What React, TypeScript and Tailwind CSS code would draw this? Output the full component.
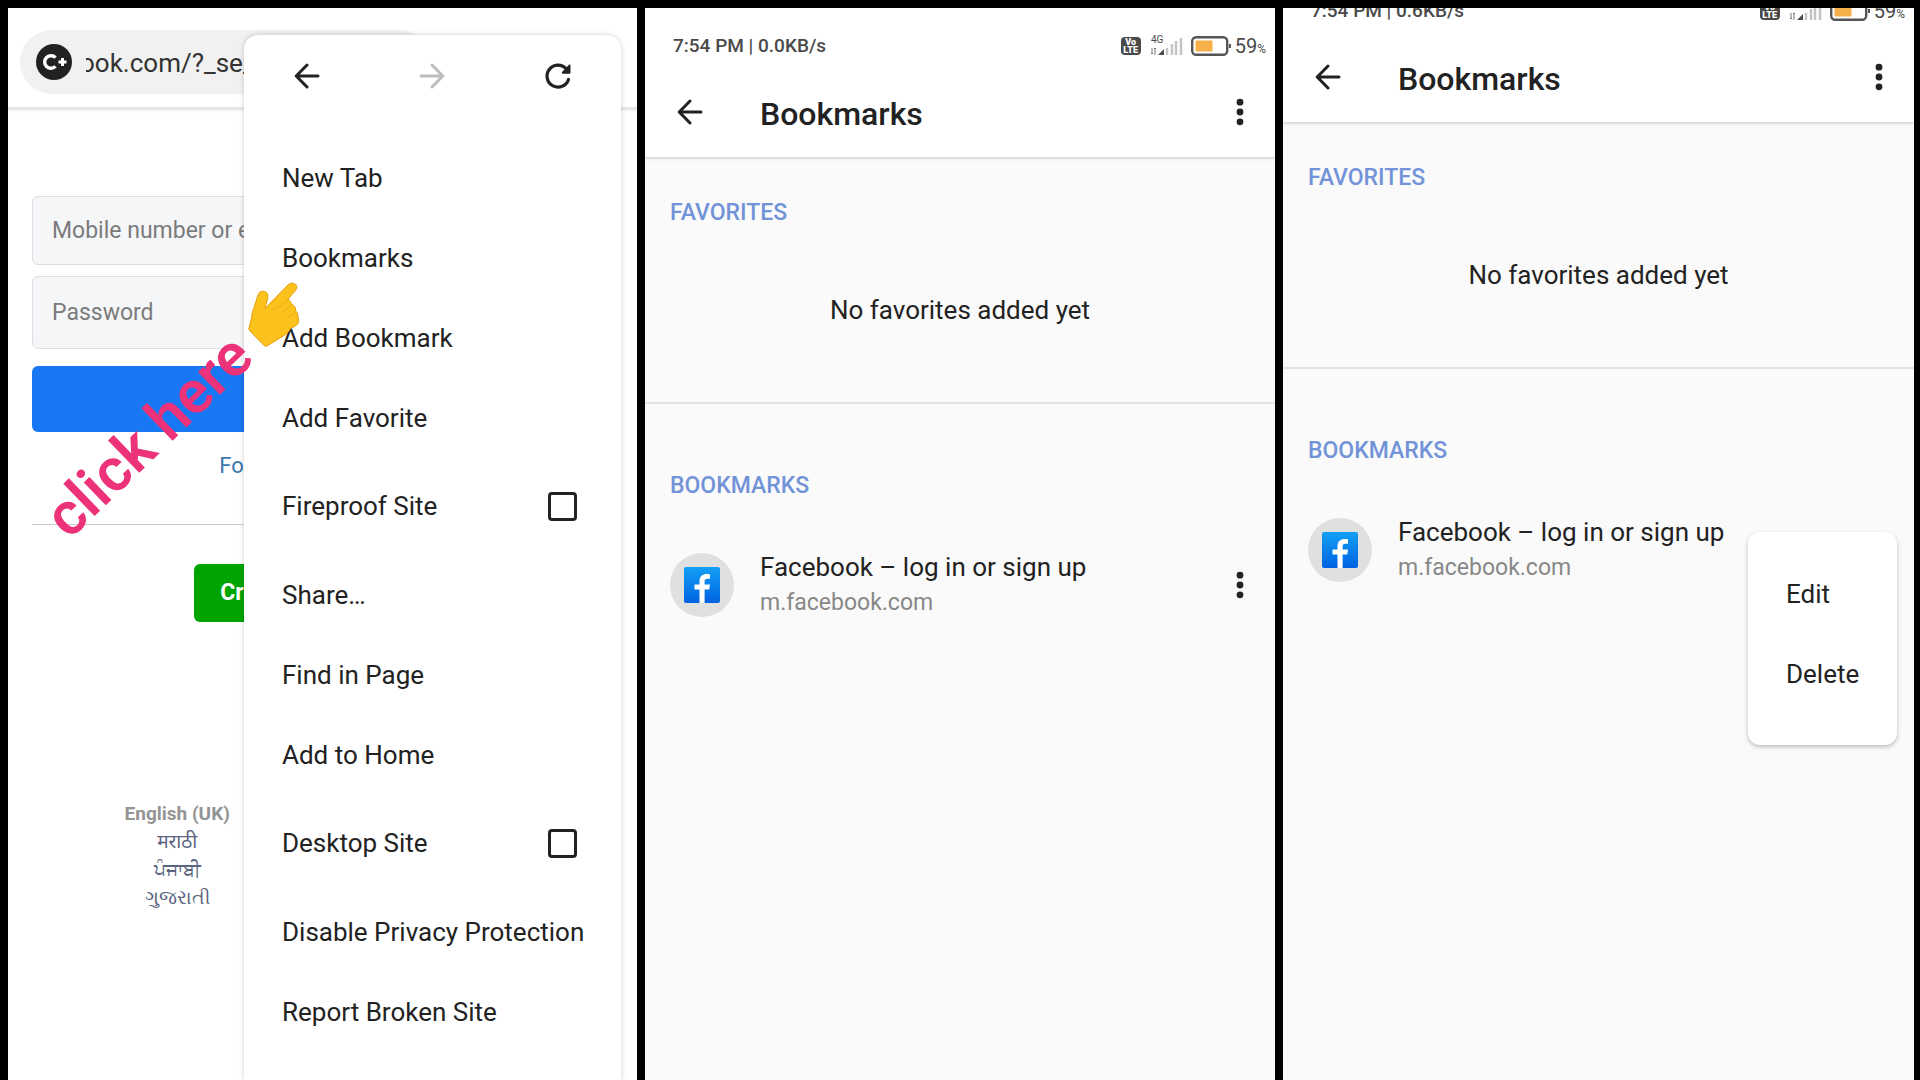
import type { ReactNode } from "react"

const menuItems = [
  { label: "New Tab" },
  { label: "Bookmarks" },
  { label: "Add Bookmark" },
  { label: "Add Favorite" },
  { label: "Fireproof Site", toggle: true },
  { label: "Share…" },
  { label: "Find in Page" },
  { label: "Add to Home" },
  { label: "Desktop Site", toggle: true },
  { label: "Disable Privacy Protection" },
  { label: "Report Broken Site" },
]

const languages = ["मराठी", "ਪੰਜਾਬੀ", "ગુજરાતી"]

function ArrowIcon({ className = "" }: { className?: string }) {
  return (
    <svg
      viewBox="0 0 26 26"
      className={`size-[26px] ${className}`}
      fill="none"
      stroke="currentColor"
      strokeWidth="3"
      strokeLinecap="round"
      strokeLinejoin="round"
      aria-hidden="true"
    >
      <path d="M24 13H2.500M13 2 2.200 13 13 24" />
    </svg>
  )
}

function ReloadIcon() {
  return (
    <svg viewBox="0 0 28 28" className="size-7" fill="none" aria-hidden="true">
      <path
        d="M24.500 17.500A11 11 0 1 1 22 6.500"
        stroke="currentColor"
        strokeWidth="3.200"
        strokeLinecap="round"
      />
      <path d="M26.500 3.500v7.200a1 1 0 0 1-1 1h-6.800c-.9 0-1.300-1-.7-1.600l6.800-7.200c.6-.7 1.700-.3 1.700.6z" fill="currentColor" />
    </svg>
  )
}

function DotsIcon() {
  return (
    <svg viewBox="0 0 8 28" className="h-7 w-2" fill="currentColor" aria-hidden="true">
      <circle cx="4" cy="4.200" r="3.400" />
      <circle cx="4" cy="14" r="3.400" />
      <circle cx="4" cy="23.800" r="3.400" />
    </svg>
  )
}

function SiteBadge() {
  return (
    <svg viewBox="0 0 36 36" className="size-9 shrink-0" fill="none" aria-hidden="true">
      <circle cx="18" cy="18" r="18" fill="#222" />
      <path d="M19.500 13.600a6.300 6.300 0 1 0 0 8.800" stroke="#fff" strokeWidth="3.400" />
      <path d="M26.500 14v8M22.500 18h8" stroke="#fff" strokeWidth="3" />
    </svg>
  )
}

function PointingHand() {
  return (
    <svg
      viewBox="742 64 156 198"
      className="absolute left-[240px] top-[274px] h-[66px] w-[52px]"
      strokeLinejoin="round"
      strokeLinecap="round"
      aria-hidden="true"
    >
      <path
        d="M864 71c12-8 27-2 24 11-1 6-7 11-12 17l-14 17c6 4 9 8 10 14 10 4 14 12 13 21 6 5 8 12 7 19 4 8 3 17-4 23-6 5-12 8-19 11-4 8-9 15-18 20-17 10-36 23-56 34-17-14-34-33-51-52l9-36c0-10 3-18 6-26l12-38c4-14 14-17 24-12 7 4 8 11 6 19l-8 30z"
        fill="#fcc21c"
        stroke="#e59d12"
        strokeWidth="3"
      />
      <path d="M862 117c-12 14-27 24-43 30M873 131c-8 10-17 17-28 21M885 153c-7 8-14 14-23 17" fill="none" stroke="#f0aa16" strokeWidth="3" />
    </svg>
  )
}

function SignalIcons() {
  return (
    <div className="flex items-center gap-2 text-[#4a4a4a]">
      <div className="flex h-[18px] w-5 flex-col items-center justify-center rounded-sm bg-[#4a4a4a] text-[9px] font-black leading-[8px] text-white">
        <span>Vo</span>
        <span>LTE</span>
      </div>
      <svg viewBox="0 0 34 22" className="h-[22px] w-[34px]" aria-hidden="true">
        <text x="2" y="8" fontSize="10" fontFamily="Roboto" fill="#4a4a4a">4G</text>
        <path d="M3 13v6M6 13v7M5 14l1-1 1 1M2 18l1 1 1-1" stroke="#777" fill="none" />
        <path d="M15 14v6H9z" fill="#4a4a4a" />
        <path d="M18 13v7M23 9v11M27 6v14M32 3v17" stroke="#c4c4c4" strokeWidth="2.500" />
      </svg>
      <svg viewBox="0 0 40 20" className="h-5 w-10" aria-hidden="true">
        <rect x="1.200" y="1.200" width="35" height="17.600" rx="4" fill="#fff" stroke="#555" strokeWidth="2.400" />
        <rect x="4.500" y="4.500" width="17" height="11" rx="1" fill="#f5b04a" />
        <path d="M39 8v4" stroke="#555" strokeWidth="2" />
      </svg>
      <span className="-ml-1 flex items-baseline text-xl leading-5">
        59<span className="text-xs">%</span>
      </span>
    </div>
  )
}

function FacebookIcon() {
  return (
    <span className="flex size-16 shrink-0 items-center justify-center rounded-full bg-[#e0e0e0]">
      <svg viewBox="0 0 36 36" className="size-9" aria-hidden="true">
        <defs>
          <linearGradient id="fb" x1="0" y1="0" x2="0" y2="1">
            <stop offset="0" stopColor="#12a0f5" />
            <stop offset="1" stopColor="#0062e0" />
          </linearGradient>
        </defs>
        <rect width="36" height="36" rx="2" fill="url(#fb)" />
        <path
          d="M15.500 36V22.500H10.500v-5h5v-3.200c0-4.900 3-7.300 7.400-7.300 1.100 0 2.100.1 3.100.2v4.600h-2.400c-2.400 0-3 1.200-3 2.900v2.800h5.400l-.8 5h-4.600V36z"
          fill="#fff"
        />
      </svg>
    </span>
  )
}

function BrowserScreen() {
  return (
    <section className="relative overflow-hidden bg-white">
      <header className="h-[101px] border-b-2 border-[#e6e6e6] px-3 pt-[22px] shadow-sm">
        <div className="flex h-16 w-[412px] items-center gap-3.5 rounded-full bg-[#f1f1f1] pl-4">
          <SiteBadge />
          <input
            aria-label="Address"
            defaultValue="ook.com/?_se_imp"
            className="min-w-0 flex-1 bg-transparent pt-0.5 indent-[-6px] text-[26px] text-[#333] outline-none"
          />
        </div>
      </header>

      <form className="flex flex-col items-center px-6 pt-[87px]">
        <input
          aria-label="Mobile number or email address"
          placeholder="Mobile number or email address"
          className="h-[69px] w-full rounded-md border border-[#dcdee1] bg-[#f5f6f7] px-[19px] text-[23px] placeholder:text-[#7b7b7b]"
        />
        <input
          type="password"
          aria-label="Password"
          placeholder="Password"
          className="mt-[11px] h-[73px] w-full rounded-md border border-[#dcdee1] bg-[#f5f6f7] px-[19px] text-[23px] placeholder:text-[#7b7b7b]"
        />
        <button type="button" className="mt-[17px] h-[66px] w-full rounded-md bg-[#1877f2] text-[23px] font-medium text-white">
          Log In
        </button>
        <a href="#" className="mt-[18px] text-[22px] leading-8 text-[#3b76ad]">
          Forgotten password?
        </a>
        <hr className="mt-[42px] w-full border-[#ccc]" />
        <button type="button" className="mt-[39px] h-[58px] rounded-md bg-[#00a400] px-[26px] text-[23px] font-bold text-white">
          Create new account
        </button>
      </form>

      <div className="grid grid-cols-2 px-6 pt-[178px] text-center text-[19px] leading-7 text-[#5a6580]">
        <div className="flex flex-col">
          <span className="font-bold text-[#949494]">English (UK)</span>
          {languages.map((name) => (
            <a key={name} href="#">
              {name}
            </a>
          ))}
        </div>
      </div>

      <nav className="absolute bottom-0 left-[236px] right-4 top-[27px] rounded-t-[14px] bg-white text-[26px] text-[#222] shadow-[0_0_5px_rgba(0,0,0,0.2)]">
        <div className="mb-[21px] grid h-[82px] grid-cols-3 place-items-center">
          <button aria-label="Back">
            <ArrowIcon />
          </button>
          <button aria-label="Forward" disabled className="text-[#bdbdbd]">
            <ArrowIcon className="rotate-180" />
          </button>
          <button aria-label="Reload">
            <ReloadIcon />
          </button>
        </div>
        {menuItems.map((item) =>
          item.toggle ? (
            <label key={item.label} className="flex h-[97px] items-center justify-between pl-[38px] pr-11">
              {item.label}
              <input type="checkbox" className="size-[29px] appearance-none rounded border-3 border-[#222]" />
            </label>
          ) : (
            <button key={item.label} className="flex h-20 w-full items-center whitespace-nowrap pl-[38px] text-left">
              {item.label}
            </button>
          )
        )}
      </nav>

      <p className="absolute left-[11px] top-[396px] -rotate-44 whitespace-nowrap text-[60px] font-semibold leading-[64px] text-[#ec3279]">
        click here
      </p>
      <PointingHand />
    </section>
  )
}

function BookmarksScreen({ speed, scrolled, children }: { speed: string; scrolled?: boolean; children?: ReactNode }) {
  return (
    <section className="relative overflow-hidden bg-[#fafafa] text-[#222]">
      <div className={scrolled ? "-mt-[35px]" : ""}>
        <header className="border-b border-[#dcdcdc] bg-white shadow-sm">
          <div className="flex h-[58px] items-center justify-between pl-7 pr-[9px] pt-[18px]">
            <span className="text-[19px] font-medium text-[#4a4a4a]">7:54 PM | {speed}</span>
            <SignalIcons />
          </div>
          <div className="flex h-[91px] items-center pl-8 pr-[31px]">
            <button aria-label="Back">
              <ArrowIcon />
            </button>
            <h1 className="ml-[57px] flex-1 pt-1 text-[32px] font-medium">Bookmarks</h1>
            <button aria-label="More options">
              <DotsIcon />
            </button>
          </div>
        </header>

        <div className="border-b-2 border-[#e2e2e2] px-[25px] pb-[76px] pt-[41px]">
          <h2 className="text-[23px] font-medium leading-7 text-[#7393d8]">FAVORITES</h2>
          <p className="mt-[67px] text-center text-[26px] leading-8">No favorites added yet</p>
        </div>

        <div className="px-[25px] pt-[68px]">
          <h2 className="text-[23px] font-medium leading-7 text-[#7393d8]">BOOKMARKS</h2>
          <div className="mt-[49px] flex items-center pr-1.5">
            <FacebookIcon />
            <a href="#" className="ml-[26px] flex-1">
              <span className="block text-[26px] leading-9">Facebook – log in or sign up</span>
              <span className="block text-[23px] leading-9 text-[#888]">m.facebook.com</span>
            </a>
            {!scrolled && (
              <button aria-label="Bookmark options">
                <DotsIcon />
              </button>
            )}
          </div>
        </div>
      </div>
      {children}
    </section>
  )
}

export default function App() {
  return (
    <main className="grid min-h-screen grid-cols-[629fr_630fr_631fr] gap-2 bg-black pl-2 pr-1.5 pt-2 font-[Roboto,'Noto_Sans',sans-serif]">
      <BrowserScreen />
      <BookmarksScreen speed="0.0KB/s" />
      <BookmarksScreen speed="0.6KB/s" scrolled>
        <div className="absolute right-[17px] top-[524px] flex w-[149px] flex-col rounded-xl bg-white pb-[31px] pt-[22px] text-[26px] shadow-[0_2px_4px_rgba(0,0,0,0.25)]">
          <button className="h-20 pl-[38px] text-left">Edit</button>
          <button className="h-20 pl-[38px] text-left">Delete</button>
        </div>
      </BookmarksScreen>
    </main>
  )
}
